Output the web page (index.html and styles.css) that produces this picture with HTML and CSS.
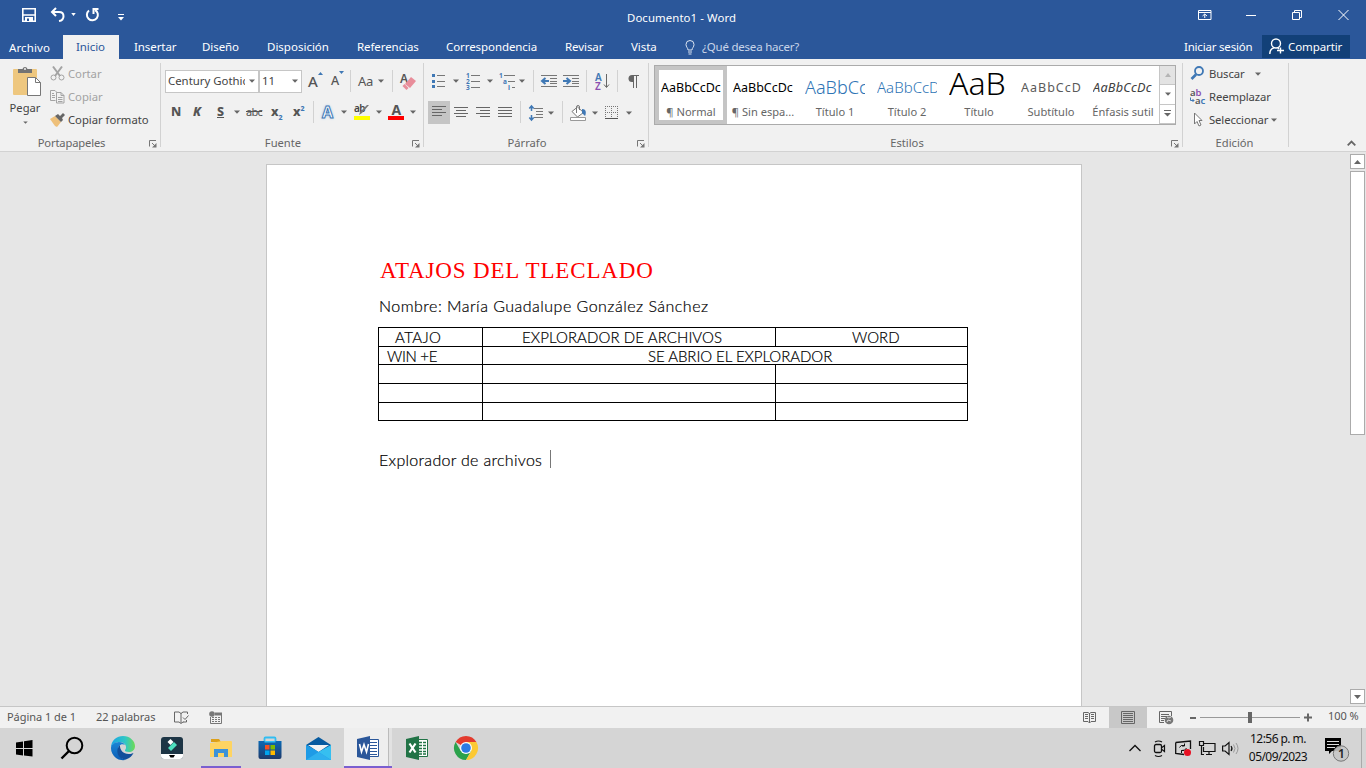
FILE: index.html
```html
<!DOCTYPE html>
<html lang="es">
<head>
<meta charset="utf-8">
<title>Documento1 - Word</title>
<link rel="stylesheet" href="styles.css">
</head>
<body>
<svg class="defs" width="0" height="0">
  <symbol id="caret" viewBox="0 0 6 4"><path d="M0 .5h6L3 3.700z" fill="#666"/></symbol>
  <symbol id="launch" viewBox="0 0 8 8"><path d="M.5 6.500V.5H7M3 3l3.500 3.500" stroke="#777" fill="none"/><path d="M7.500 3v4.500H3z" fill="#777"/></symbol>
</svg>

<header class="titlebar">
  <div class="quick">
    <svg width="16" height="16" viewBox="0 0 16 16"><path d="M1.800 1.800h12.400v12.400H1.800zM2 8h12" fill="none" stroke="#fff" stroke-width="1.600"/><path d="M4 10h8v4H4z" fill="#fff"/><path d="M6 11.500h2V14H6z" fill="#2b579a"/></svg>
    <svg width="16" height="16" viewBox="0 0 16 16"><path d="M6 1L2 5l4 4M2.500 5h6.500c6 0 6 8 0 9" fill="none" stroke="#fff" stroke-width="2"/></svg>
    <svg class="car-w" width="5" height="3" viewBox="0 0 6 4"><path d="M0 0h6L3 4z" fill="#fff"/></svg>
    <svg width="15" height="16" viewBox="0 0 15 16"><path d="M4 3.500A5.500 5.500 0 1 0 10 3" fill="none" stroke="#fff" stroke-width="2"/><path d="M8.500 7V2h5" fill="none" stroke="#fff" stroke-width="2"/></svg>
    <svg width="6" height="7" viewBox="0 0 6 7"><path d="M0 .5h6" stroke="#fff"/><path d="M0 3h6L3 6.500z" fill="#fff"/></svg>
  </div>
  <div class="doc-name">Documento1 - Word</div>
  <div class="win-buttons">
    <svg width="14" height="12" viewBox="0 0 14 12"><path d="M.5 1.500h12.500v9H.5zM.5 3.500H13M6.750 9V5M4.500 7l2.250-2L9 7" fill="none" stroke="#fff"/></svg>
    <svg width="11" height="12" viewBox="0 0 11 12"><path d="M0 6.500h10" stroke="#fff"/></svg>
    <svg width="11" height="12" viewBox="0 0 11 12"><path d="M.5 3.500h7v7h-7zM2.500 3V1.500h7v7H8" fill="none" stroke="#fff"/></svg>
    <svg width="11" height="12" viewBox="0 0 11 12"><path d="M.5 1l10 10M10.500 1l-10 10" stroke="#fff" fill="none"/></svg>
  </div>
</header>

<nav class="tabs">
  <div class="tab-list">
    <span class="file">Archivo</span><span class="active">Inicio</span><span>Insertar</span><span>Diseño</span><span>Disposición</span><span>Referencias</span><span>Correspondencia</span><span>Revisar</span><span>Vista</span>
    <span class="tell"><svg width="10" height="15" viewBox="0 0 10 15"><path d="M3 10C3 8 1 7 1 4.500a4 4 0 0 1 8 0C9 7 7 8 7 10zM3 12h4M3.500 14h3" fill="none" stroke="#dce5f2"/></svg>¿Qué desea hacer?</span>
  </div>
  <div class="account"><span class="signin">Iniciar sesión</span><span class="share"><svg width="16" height="17" viewBox="0 0 16 17"><circle cx="7" cy="5.500" r="4.500" fill="none" stroke="#fff" stroke-width="1.400"/><path d="M.8 16c0-3.500 1.700-5.500 4-6M9 10l1 1M11.500 9.500v6M8 12.500h7" fill="none" stroke="#fff" stroke-width="1.400"/></svg>Compartir</span></div>
</nav>

<section class="ribbon">
  <div class="group clipboard">
    <div class="clip-body">
      <div class="paste">
        <svg width="30" height="31" viewBox="0 0 30 31"><rect x="1" y="3" width="24" height="26" rx="1" fill="#eec77f"/><path d="M6 3h4.500a2.600 2.600 0 0 1 5 0H20v4H6z" fill="#737373"/><circle cx="13" cy="3" r="1" fill="#f1f1f1"/><path d="M15.500 11.500h8l5 5v13h-13z" fill="#fff" stroke="#777"/><path d="M23.500 11.500v5h5" fill="none" stroke="#777"/></svg>
        <span>Pegar</span>
        <svg width="5" height="3"><use href="#caret"/></svg>
      </div>
      <div class="clip-list">
        <div class="dim"><svg width="15" height="15" viewBox="0 0 15 15"><path d="M3 .5l7 9.500M12 .5L5 10" stroke="#a3a3a3" stroke-width="2"/><circle cx="3.500" cy="11.500" r="2.500" fill="none" stroke="#a3a3a3"/><circle cx="11.500" cy="11.500" r="2.500" fill="none" stroke="#a3a3a3"/></svg><span>Cortar</span></div>
        <div class="dim"><svg width="15" height="15" viewBox="0 0 15 15"><path d="M5.500 11.500h-5v-10H5l2.500 2.500M2 4.500h2M2 6.500h3M2 8.500h3M6.500 3.500H11l3 3v7.500H6.500zM11 3.500v3h3M8 8.500h4.500M8 10.500h4.500M8 12.500h4.500" fill="none" stroke="#a3a3a3"/></svg><span>Copiar</span></div>
        <div><svg width="15" height="15" viewBox="0 0 15 15"><path d="M0 7l5-3 6 6-4 5-2-1z" fill="#eec07a"/><path d="M5 4l3-2 2 2 3-3 2 2-3 3 1 2-2 2z" fill="#666"/></svg><span>Copiar formato</span></div>
      </div>
    </div>
    <div class="caption"><span>Portapapeles</span><svg width="8" height="8"><use href="#launch"/></svg></div>
  </div>

  <div class="group font">
    <div class="tools font-a">
      <div class="combo family"><span>Century Gothic</span><svg width="6" height="4"><use href="#caret"/></svg></div>
      <div class="combo size"><span>11</span><svg width="6" height="4"><use href="#caret"/></svg></div>
      <span class="glyph grow">A<svg width="5" height="3" viewBox="0 0 5 3"><path d="M0 3h5L2.500 0z" fill="#3f78b5"/></svg></span>
      <span class="glyph grow shrink">A<svg width="5" height="3" viewBox="0 0 5 3"><path d="M0 0h5L2.500 3z" fill="#3f78b5"/></svg></span>
      <i class="rule"></i>
      <span class="glyph aa">Aa</span>
      <svg width="6" height="4"><use href="#caret"/></svg>
      <i class="rule"></i>
      <svg width="17" height="17" viewBox="0 0 17 17"><text x="0" y="10" class="svg-a">A</text><path d="M5 11l6-7 5 4-6 7z" fill="#e88d9a"/><path d="M3.500 12l4 4" stroke="#e88d9a" stroke-width="3"/></svg>
    </div>
    <div class="tools font-b">
      <b class="glyph">N</b><b class="glyph ital">K</b><b class="glyph under">S</b>
      <svg width="6" height="4"><use href="#caret"/></svg>
      <span class="glyph strike">abc</span>
      <b class="glyph">x<sub>2</sub></b><b class="glyph">x<sup>2</sup></b>
      <i class="rule"></i>
      <span class="effect">A</span>
      <svg width="6" height="4"><use href="#caret"/></svg>
      <svg width="17" height="17" viewBox="0 0 17 17"><text x="0" y="8" class="svg-ab">ab</text><path d="M15 1L8 9l-3 2 1-3 7-7z" fill="#777"/><path d="M0 12h16v4H0z" fill="#ff0"/></svg>
      <svg width="6" height="4"><use href="#caret"/></svg>
      <svg width="17" height="17" viewBox="0 0 17 17"><text x="3.500" y="11" class="svg-fa">A</text><path d="M0 12h16v4H0z" fill="#f00"/></svg>
      <svg width="6" height="4"><use href="#caret"/></svg>
    </div>
    <div class="caption"><span>Fuente</span><svg width="8" height="8"><use href="#launch"/></svg></div>
  </div>

  <div class="group paragraph">
    <div class="tools par-a">
      <svg width="14" height="16" viewBox="0 0 14 16"><path d="M0 1h3v3H0zM0 7h3v3H0zM0 12h3v3H0z" fill="#3f78b5"/><path d="M5 2.500h8M5 8.500h8M5 13.500h8" stroke="#777"/></svg>
      <svg width="6" height="4"><use href="#caret"/></svg>
      <svg width="15" height="17" viewBox="0 0 15 17"><text class="svg-n" x="0" y="5">1</text><text class="svg-n" x="0" y="11">2</text><text class="svg-n" x="0" y="17">3</text><path d="M5 2.500h9M5 8.500h9M5 14.500h9" stroke="#777"/></svg>
      <svg width="6" height="4"><use href="#caret"/></svg>
      <svg width="16" height="17" viewBox="0 0 16 17"><text class="svg-n" x="0" y="5">1</text><text class="svg-n" x="4" y="11">a</text><text class="svg-n" x="9" y="17">i</text><path d="M5 2.500h11M9 8.500h7M13 14.500h3" stroke="#777"/></svg>
      <svg width="6" height="4"><use href="#caret"/></svg>
      <i class="rule"></i>
      <svg width="16" height="14" viewBox="0 0 16 14"><path d="M0 1.500h16M9 4.500h7M9 7.500h7M9 9.500h7M0 12.500h16" stroke="#777"/><path d="M8 7H2M4.500 4L1 7l3.500 3" fill="none" stroke="#3f78b5" stroke-width="2"/></svg>
      <svg width="16" height="14" viewBox="0 0 16 14"><path d="M0 1.500h16M9 4.500h7M9 7.500h7M9 9.500h7M0 12.500h16" stroke="#777"/><path d="M0 7h6M3.500 4L7 7l-3.500 3" fill="none" stroke="#3f78b5" stroke-width="2"/></svg>
      <i class="rule"></i>
      <svg width="15" height="17" viewBox="0 0 15 17"><text x="0" y="8" class="svg-az blue">A</text><text x="0" y="17" class="svg-az purple">Z</text><path d="M11.500 1v13M9 11.500l2.500 3 2.500-3" fill="none" stroke="#666"/></svg>
      <i class="rule"></i>
      <svg width="11" height="13" viewBox="0 0 11 13"><path d="M5 .5h6M5.500 0v13M8.500 0v13" stroke="#666" fill="none"/><path d="M6 0v7H4A3.500 3.500 0 0 1 4 0z" fill="#666"/></svg>
    </div>
    <div class="tools par-b">
      <span class="chosen"><svg width="15" height="12" viewBox="0 0 15 12"><path d="M0 .5h14M0 3.500h10M0 6.500h14M0 9.500h10" stroke="#666"/></svg></span>
      <svg width="15" height="12" viewBox="0 0 15 12"><path d="M0 .5h14M2 3.500h10M0 6.500h14M2 9.500h10" stroke="#666"/></svg>
      <svg width="15" height="12" viewBox="0 0 15 12"><path d="M0 .5h14M4 3.500h10M0 6.500h14M4 9.500h10" stroke="#666"/></svg>
      <svg width="15" height="12" viewBox="0 0 15 12"><path d="M0 .5h14M0 3.500h14M0 6.500h14M0 9.500h14" stroke="#666"/></svg>
      <i class="rule"></i>
      <svg width="15" height="16" viewBox="0 0 15 16"><path d="M5 3.500h9M7 6.500h7M7 9.500h7M5 12.500h9" stroke="#777"/><path d="M2.500 1v5M2.500 10v5M.3 3.500L2.500 1l2.200 2.500M.3 12.500L2.500 15l2.200-2.500" fill="none" stroke="#3f78b5" stroke-width="1.500"/></svg>
      <svg width="6" height="4"><use href="#caret"/></svg>
      <i class="rule"></i>
      <svg width="17" height="16" viewBox="0 0 17 16"><path d="M2 6.500L7.500 2l6 5.500-6 4.500z" fill="#fff" stroke="#777"/><path d="M6.500 8V2a1.500 1.500 0 0 1 3 0v3" fill="none" stroke="#777"/><path d="M12 4c5 0 4 5 3 7l-3-3z" fill="#3f78b5"/><path d="M.5 12.500h15v3H.5z" fill="#fff" stroke="#999"/></svg>
      <svg width="6" height="4"><use href="#caret"/></svg>
      <svg width="13" height="13" viewBox="0 0 13 13"><path d="M.5 0v12M6.500 0v12M12.500 0v12M0 .5h13M0 6.500h13" stroke="#777" stroke-dasharray="1 1"/><path d="M0 12.500h13" stroke="#555"/></svg>
      <svg width="6" height="4"><use href="#caret"/></svg>
    </div>
    <div class="caption"><span>Párrafo</span><svg width="8" height="8"><use href="#launch"/></svg></div>
  </div>

  <div class="group styles">
    <div class="gallery">
      <div class="style on"><div class="sample">AaBbCcDc</div><span>¶ Normal</span></div>
      <div class="style"><div class="sample">AaBbCcDc</div><span>¶ Sin espa...</span></div>
      <div class="style"><div class="sample h1">AaBbCc</div><span>Título 1</span></div>
      <div class="style"><div class="sample h2">AaBbCcD</div><span>Título 2</span></div>
      <div class="style"><div class="sample big">AaB</div><span>Título</span></div>
      <div class="style"><div class="sample sub">AaBbCcD</div><span>Subtítulo</span></div>
      <div class="style"><div class="sample emph">AaBbCcDc</div><span>Énfasis sutil</span></div>
      <div class="gallery-nav">
        <i class="off"><svg width="6" height="4" viewBox="0 0 6 4"><path d="M0 4h6L3 0z" fill="#b5b5b5"/></svg></i>
        <i><svg width="6" height="4"><use href="#caret"/></svg></i>
        <i><svg width="7" height="7" viewBox="0 0 7 7"><path d="M0 .5h7" stroke="#666"/><path d="M0 3h7L3.500 6.500z" fill="#666"/></svg></i>
      </div>
    </div>
    <div class="caption"><span>Estilos</span><svg width="8" height="8"><use href="#launch"/></svg></div>
  </div>

  <div class="group editing">
    <div class="edit-list">
      <div><svg width="15" height="15" viewBox="0 0 15 15"><circle cx="9" cy="5" r="4" fill="none" stroke="#3f78b5" stroke-width="1.800"/><path d="M6 8.500L1.500 13" stroke="#3f78b5" stroke-width="2.600"/></svg><span>Buscar</span><svg class="far" width="6" height="4"><use href="#caret"/></svg></div>
      <div><svg width="15" height="16" viewBox="0 0 15 16"><text x="0" y="7" class="svg-r">a<tspan fill="#8a4fb0">b</tspan></text><text x="5" y="15" class="svg-r">a<tspan fill="#3f78b5">c</tspan></text><path d="M.5 8.500v3H4M2.500 10L4 11.500 2.500 13" fill="none" stroke="#3f78b5"/></svg><span>Reemplazar</span></div>
      <div><svg width="15" height="15" viewBox="0 0 15 15"><path d="M4.500 1v11l2.500-2.500 2 4.500 2-1-2-4.500h3z" fill="#fff" stroke="#777"/></svg><span>Seleccionar</span><svg class="near" width="6" height="4"><use href="#caret"/></svg></div>
    </div>
    <div class="caption"><span>Edición</span></div>
  </div>
  <svg class="collapse" width="9" height="6" viewBox="0 0 9 6"><path d="M.7 5.300l3.800-3.800 3.800 3.800" fill="none" stroke="#666" stroke-width="1.800"/></svg>
</section>

<main class="workspace">
  <article class="sheet">
    <h1>ATAJOS DEL TLECLADO</h1>
    <p class="name">Nombre: María Guadalupe González Sánchez</p>
    <table>
      <colgroup><col class="c1"><col class="c2"><col class="c3"></colgroup>
      <tr class="tall"><td class="atajo">ATAJO</td><td class="explora">EXPLORADOR DE ARCHIVOS</td><td class="word">WORD</td></tr>
      <tr><td class="win">WIN +E</td><td class="abrio" colspan="2">SE ABRIO EL EXPLORADOR</td></tr>
      <tr class="tall"><td></td><td></td><td></td></tr>
      <tr class="tall"><td></td><td></td><td></td></tr>
      <tr><td></td><td></td><td></td></tr>
    </table>
    <p class="last">Explorador de archivos<i class="cursor"></i></p>
  </article>
  <div class="scroll">
    <i class="arrow"><svg width="7" height="4" viewBox="0 0 7 4"><path d="M0 4h7L3.500 0z" fill="#666"/></svg></i>
    <i class="thumb"></i>
    <i class="arrow down"><svg width="7" height="4" viewBox="0 0 7 4"><path d="M0 0h7L3.500 4z" fill="#666"/></svg></i>
  </div>
</main>

<footer class="status">
  <span class="t-pag">Página 1 de 1</span><span class="t-pal">22 palabras</span>
  <svg width="15" height="13" viewBox="0 0 15 13"><path d="M7 2.500L5 1H.5v10H5l2 1.500L9 11h1M7 2v10M7 2.500L9 1h4.500v2M9 6.500l2 2 3.500-4M12.500 9v2h-3" fill="none" stroke="#666"/></svg>
  <svg class="macro" width="14" height="13" viewBox="0 0 14 13"><path d="M1.500 6v6.500h11v-10H7M3 6.500h2m1 0h2m1 0h2M3 8.500h2m1 0h2m1 0h2M3 10.500h2m1 0h2m1 0h2" fill="none" stroke="#777"/><path d="M6 1.500h7v3H6z" fill="#777"/><circle cx="3" cy="3" r="2.800" fill="#777"/></svg>
  <div class="views">
    <svg width="14" height="13" viewBox="0 0 14 13"><path d="M6.500 2.500L5 1.500H.5v9H5l1.500 1.500L8 10.500h4.500v-9H8zM6.500 2v10M2 3.500h3M2 5.500h3M2 7.500h3M8 3.500h3M8 5.500h3M8 7.500h3" fill="none" stroke="#666"/></svg>
    <span class="view-on"><svg width="14" height="13" viewBox="0 0 14 13"><path d="M.5.5h13v12H.5zM2 2.500h10M2 4.500h10M2 6.500h10M2 8.500h10M2 10.500h10" fill="none" stroke="#666"/></svg></span>
    <svg width="15" height="14" viewBox="0 0 15 14"><path d="M5 11.500H.5V.5h12V5M2 3.500h8M2 5.500h6M2 7.500h4M2 9.500h3" fill="none" stroke="#666"/><circle cx="10" cy="9" r="4.300" fill="#777"/><path d="M8 6l2 1 2-1M8 11l1-2 3 1" fill="none" stroke="#ddd"/></svg>
  </div>
  <div class="zoom"><i class="minus"></i><div class="track"><i class="handle"></i></div><svg width="9" height="9" viewBox="0 0 9 9"><path d="M0 4.500h8M4 .5v8" stroke="#666" stroke-width="2"/></svg><span>100 %</span></div>
</footer>

<div class="taskbar">
  <div class="apps">
    <div class="app"><svg width="17" height="17" viewBox="0 0 17 17"><path d="M0 2.500l7-1v6.500H0zM8 1.300L16.500 0v8H8zM0 9h7v6.500l-7-1zM8 9h8.500v7.500L8 15.500z"/></svg></div>
    <div class="app search"><svg width="24" height="24" viewBox="0 0 24 24"><circle cx="14.500" cy="9.500" r="7.800" fill="none" stroke="#000" stroke-width="2"/><path d="M9 15L1.500 22.500" stroke="#000" stroke-width="2.400"/></svg></div>
    <div class="app edge"><svg width="24" height="24" viewBox="0 0 24 24"><defs><linearGradient id="e1"><stop stop-color="#1ba4e4"/><stop offset=".6" stop-color="#30c7c5"/><stop offset="1" stop-color="#6edb54"/></linearGradient><linearGradient id="e2" x2="0" y2="1"><stop stop-color="#1b86d6"/><stop offset="1" stop-color="#0c5db5"/></linearGradient></defs><path d="M0 12C0 4 6 0 12 0c7 0 12 5 12 10 0 4-3 6-6 6-3 0-4.500-1-4-2 1-1 1-2 1-3 0-3-3-5-6.500-5C4 6 1 8.500 0 12z" fill="url(#e1)"/><path d="M0 12c0-3 3.500-6 8-6 3 0 5 1 6 3-4-2-7 1-7 5 0 5 4 10 9 9.500A12 12 0 0 1 0 12z" fill="url(#e2)"/><path d="M9 9c-6 6-1 16 7 14 3-1 5-3 6.500-6-2 1-4 1-5 1-5 0-9-4-8.500-9z" fill="#124f9b"/></svg></div>
    <div class="app"><svg width="22" height="22" viewBox="0 0 22 22"><rect width="22" height="22" rx="3" fill="#1d3545"/><path d="M0 17h22v2a3 3 0 0 1-3 3H3a3 3 0 0 1-3-3z" fill="#fff"/><path d="M9.500 2l3 3-3 3-3-3z" fill="#fff"/><path d="M13 5l3 3-6 6-3-3z" fill="#4ee0bf"/><path d="M8 18h6l-1.500 2.500h-3z"/></svg></div>
    <div class="app running"><svg width="22" height="20" viewBox="0 0 22 20"><path d="M1 1h8l2 3H1z" fill="#dda019"/><path d="M1 5l11-2h9a1 1 0 0 1 1 1v15H0V5z" fill="#fed462"/><path d="M4 11h14v8h-4v-4H8v4H4z" fill="#3d92d8"/></svg></div>
    <div class="app"><svg width="24" height="24" viewBox="0 0 24 24"><defs><linearGradient id="st" x2="0" y2="1"><stop stop-color="#0a68b4"/><stop offset="1" stop-color="#1f3a6b"/></linearGradient></defs><path d="M6.500 7V2.500q0-1 1-1h9q1 0 1 1V7" fill="none" stroke="#31bdf2" stroke-width="1.800"/><path d="M.5 5h23v16a2 2 0 0 1-2 2h-19a2 2 0 0 1-2-2z" fill="url(#st)"/><path d="M6.500 5h11v1.500h-11z" fill="#31bdf2"/><path d="M7 9h4.500v4.500H7z" fill="#f25022"/><path d="M12.500 9H17v4.500h-4.500z" fill="#7fba00"/><path d="M7 14.500h4.500V19H7z" fill="#00a4ef"/><path d="M12.500 14.500H17V19h-4.500z" fill="#ffb900"/></svg></div>
    <div class="app"><svg width="25" height="23" viewBox="0 0 25 23"><path d="M0 8l12.500-8L25 8v7H0z" fill="#075a9f"/><path d="M2 8h21l-10.500 7z" fill="#f3f3f3"/><path d="M0 8l12.500 7L25 8v15H0z" fill="#36bff0"/><path d="M0 8l12.500 7L25 23H0z" fill="#1e9be6"/><path d="M0 23l12.500-8L25 23z" fill="#2fb0ee"/></svg></div>
    <div class="app current"><svg width="24" height="24" viewBox="0 0 24 24"><path d="M12 3.500h10.500v17H12" fill="#fff" stroke="#2b579a"/><path d="M13 6.500h8M13 9.500h8M13 12.500h8M13 15.500h8M13 18.500h8" stroke="#2b579a"/><path d="M1 3l13-3v24L1 21z" fill="#2b579a"/><path d="M3.500 8l2 8L8 8.500l2.500 7.500 2-8" fill="none" stroke="#fff" stroke-width="1.600"/></svg></div>
    <div class="app"><svg width="24" height="24" viewBox="0 0 24 24"><path d="M12 3.500h10.500v17H12" fill="#fff" stroke="#217346"/><path d="M14 6.500h3m1 0h3M14 9.500h3m1 0h3M14 12.500h3m1 0h3M14 15.500h3m1 0h3M14 18h3m1 0h3" stroke="#217346" stroke-width="1.500"/><path d="M1 3l13-3v24L1 21z" fill="#217346"/><path d="M4.500 7.500l6 9M10.500 7.500l-6 9" stroke="#fff" stroke-width="2.200"/></svg></div>
    <div class="app"><svg width="24" height="24" viewBox="0 0 24 24"><path d="M12 12L1.600 6A12 12 0 0 1 22.400 6z" fill="#e33b2e"/><path d="M12 12l5.200 3L12 24A12 12 0 0 1 1.600 6l5.200 9z" fill="#2ba24c"/><path d="M12 6h10.400A12 12 0 0 1 12 24l5.200-9z" fill="#fcc934"/><circle cx="12" cy="12" r="6" fill="#fff"/><circle cx="12" cy="12" r="4.800" fill="#2c7be5"/></svg></div>
  </div>
  <div class="tray">
    <svg width="12" height="8" viewBox="0 0 12 8"><path d="M.5 7L6 1.500 11.500 7" fill="none" stroke="#111" stroke-width="1.300"/></svg>
    <svg width="14" height="17" viewBox="0 0 14 17"><rect x="1.500" y="4.500" width="7" height="8" rx="1.500" fill="none" stroke="#111" stroke-width="1.300"/><path d="M9 7.500l2.500-2v6L9 9.500M2 2q3.500-2 7 0M2 15.500q3.500 2 7 0" fill="none" stroke="#111" stroke-width="1.200"/></svg>
    <svg width="17" height="17" viewBox="0 0 17 17"><path d="M.7 2.500L15.500 1v8M.7 2.500v11L9 14.500" fill="none" stroke="#111" stroke-width="1.300"/><path d="M4.500 7.500q1-3 5-2M9.500 3.500V6H7M11.500 8q-1 3-5 2.500M6.500 13v-2.500H9" fill="none" stroke="#111"/><circle cx="12.500" cy="12.500" r="3.500" fill="#e81123"/></svg>
    <svg width="17" height="15" viewBox="0 0 17 15"><path d="M5 2.500h11v8H4.500V6M.5.500h4v4h-4zM2.500 5v8.500H5M10 11v2.500M7 13.500h6" fill="none" stroke="#111" stroke-width="1.200"/></svg>
    <svg width="18" height="15" viewBox="0 0 18 15"><path d="M.6 5h2.500L7 1.500v12L3.100 10H.6zM9 5q2 2.500 0 5" fill="none" stroke="#111" stroke-width="1.200"/><path d="M11.500 3.500q3 4 0 8M14 2q4 5.500 0 11" fill="none" stroke="#999"/></svg>
    <div class="clock"><span>12:56 p. m.</span><span>05/09/2023</span></div>
    <svg class="notice" width="25" height="26" viewBox="0 0 25 26"><path d="M0 1h16v13H7l-3 3v-3H0z" fill="#000"/><path d="M2 4.500h12M2 7.500h12M2 10.500h8" stroke="#ddd"/><circle cx="16" cy="16.500" r="7.700" fill="#c6c6c6" fill-opacity=".9" stroke="#777"/><text x="13" y="21" class="svg-one">1</text></svg>
    <i class="peek"></i>
  </div>
</div>
</body>
</html>
```

FILE: styles.css
```css
* { box-sizing: border-box; }
body { margin: 0; width: 1366px; height: 768px; overflow: hidden; background: #e6e6e6; color: #444; font: 11.4px/16px "Noto Sans", "Open Sans", sans-serif; display: flex; flex-direction: column; }
.defs { display: none; }
svg { display: block; flex: none; overflow: visible; }
i { font-style: normal; }

.titlebar { height: 35px; background: #2b579a; display: flex; align-items: flex-start; color: #fff; flex: none; }
.quick { display: flex; align-items: center; padding: 7px 0 0 21px; width: 627px; }
.quick svg:nth-child(2) { margin-left: 13px; }
.quick .car-w { margin: 0 0 2px 5px; }
.quick svg:nth-child(4) { margin-left: 9px; }
.quick svg:nth-child(5) { margin: 4px 0 0 18px; }
.doc-name { padding-top: 10px; width: 571px; letter-spacing: .08px; }
.win-buttons { display: grid; grid-template-columns: 48px 46px 46px 12px; padding-top: 9px; }

.tabs { height: 24px; background: #2b579a; color: #fff; display: flex; justify-content: space-between; font-size: 11.5px; line-height: 24px; flex: none; }
.tab-list { display: flex; letter-spacing: -.08px; }
.tab-list span { padding-left: 15px; white-space: nowrap; }
.tab-list span:nth-child(1) { width: 63px; padding-left: 9px; line-height: 26px; letter-spacing: .1px; }
.tab-list .active { width: 56px; padding-left: 13px; background: #f1f1f1; color: #2b579a; }
.tab-list span:nth-child(3) { width: 68px; }
.tab-list span:nth-child(4) { width: 65px; }
.tab-list span:nth-child(5) { width: 90px; letter-spacing: 0; }
.tab-list span:nth-child(6) { width: 89px; }
.tab-list span:nth-child(7) { width: 119px; }
.tab-list span:nth-child(8) { width: 66px; }
.tab-list span:nth-child(9) { width: 54px; }
.tab-list .tell { display: flex; gap: 7px; align-items: center; color: #c8d5e9; letter-spacing: -.22px; }
.account { display: flex; }
.signin { width: 78px; letter-spacing: -.2px; }
.share { width: 88px; height: 23px; margin-right: 16px; background: #124078; display: flex; align-items: center; gap: 3px; padding-left: 7px; letter-spacing: -.1px; }

.ribbon { height: 93px; background: #f1f1f1; border-bottom: 1px solid #d2d2d2; display: flex; flex: none; font-size: 11.3px; }
.group { height: 84px; margin-top: 4px; border-right: 1px solid #d2d2d2; display: flex; flex-direction: column; }
.caption { height: 16px; display: flex; align-items: center; justify-content: center; color: #666; position: relative; margin: auto 0 -4px; font-size: 11.2px; }
.caption span { margin-right: 18px; }
.caption svg { position: absolute; right: 3px; top: 5px; }
.clipboard { width: 161px; }
.clipboard .caption span { margin-right: 17px; letter-spacing: -.15px; }
.font { width: 263px; }
.paragraph { width: 225px; }
.styles { width: 534px; }
.editing { width: 106px; }
.editing .caption span { margin: 0 2px 0 0; }
.styles .caption span { margin-right: 17px; }

.clip-body { display: flex; height: 71px; }
.paste { width: 50px; padding-top: 3px; display: flex; flex-direction: column; align-items: center; color: #444; }
.paste svg:first-child { margin-left: 4px; }
.paste span { margin: 3px 0 5px; font-size: 11.2px; }
.clip-list, .edit-list { margin-top: -1px; }
.clip-list > div, .edit-list > div { height: 23px; display: flex; align-items: center; gap: 3px; white-space: nowrap; letter-spacing: -.03px; }
.clip-list .dim { color: #a3a3a3; }

.tools { display: grid; align-items: center; height: 24px; color: #444; flex: none; }
.font-a { grid-template-columns: 94px 49px 23px 19px 8px 20px 14px 8px 20px; padding-left: 4px; margin-top: 6px; }
.font-b { grid-template-columns: 22px 24px 18px 12px 24px 22px 21px 9px 19px 13px 22px 12px 22px 8px; padding-left: 9px; margin-top: 7px; }
.par-a { grid-template-columns: 21px 13px 21px 12px 20px 14px 8px 22px 23px 9px 22px 11px 11px; padding-left: 8px; margin-top: 6px; }
.par-b { grid-template-columns: 26px 22px 22px 22px 9px 19px 14px 8px 22px 13px 21px 8px; padding-left: 4px; margin-top: 7px; }
.par-b > svg { margin-top: 1px; }
.rule { width: 1px; height: 22px; background: #d2d2d2; }
.combo { height: 23px; border: 1px solid #c6c6c6; background: #fff; display: flex; align-items: center; justify-content: space-between; padding: 0 3px 0 2px; }
.combo span { overflow: hidden; white-space: nowrap; font-size: 11.4px; }
.family span { width: 77px; }
.family { width: 94px; }
.size { width: 43px; }
.glyph { font-size: 13px; white-space: nowrap; line-height: 20px; color: #555; }
b.glyph { font: 800 12.5px/20px "Noto Sans", sans-serif; padding-left: 1px; }
.glyph sub, .glyph sup { font-size: 7px; color: #3f78b5; line-height: 0; }
.ital { font-style: italic !important; }
.under { text-decoration: underline; }
.strike { text-decoration: line-through; font-size: 11px; letter-spacing: -.7px; }
.grow { display: flex; align-items: flex-start; font-size: 15px; font-weight: 500; line-height: 22px; }
.grow svg { margin-top: 2px; }
.shrink { font-size: 12.5px; line-height: 24px; }
.aa { font-size: 13px; letter-spacing: -.4px; }
.effect { color: #fff; font: 700 16px/22px "Noto Sans", sans-serif; -webkit-text-stroke: 1px #3f78b5; text-shadow: 0 0 3px #7eb2e2; }
.svg-a { font: 600 12px "Noto Sans"; fill: #555; }
.svg-ab { font: 600 10px "Noto Sans"; fill: #444; letter-spacing: -.5px; }
.svg-fa { font: 700 14px "Noto Sans"; fill: #555; }
.svg-n { font: 700 6.5px "Noto Sans"; fill: #3f78b5; }
.svg-az { font: 600 10px "Noto Sans"; }
.blue { fill: #3f78b5; }
.purple { fill: #8a4fb0; }
.svg-r { font: 600 9.5px "Noto Sans"; fill: #555; }
.svg-one { font: 600 12px "Noto Sans"; fill: #222; }
.chosen { width: 22px; height: 23px; background: #c5c5c5; display: grid; place-items: center; }

.gallery { margin: 2px 0 0 5px; width: 522px; height: 60px; border: 1px solid #ababab; background: #fff; display: flex; }
.style { width: 72px; height: 58px; text-align: center; display: flex; flex-direction: column; align-items: center; color: #666; white-space: nowrap; font-size: 11.1px; }
.on { box-shadow: inset 0 0 0 4px #c5c5c5; }
.sample { width: 60px; height: 36px; line-height: 43px; overflow: hidden; text-align: left; color: #000; font-size: 12.5px; letter-spacing: 0; margin-bottom: 2px; }
.h1 { font-size: 18px; font-weight: 300; color: #2e74b5; }
.h2 { font-size: 15px; font-weight: 300; color: #2e74b5; }
.big { font-size: 32px; font-weight: 300; line-height: 34px; }
.sub { color: #5a5a5a; letter-spacing: 1px; }
.emph { font-style: italic; color: #404040; letter-spacing: .25px; font-size: 12.7px; }
.gallery-nav { width: 16px; display: flex; flex-direction: column; border-left: 1px solid #c6c6c6; }
.gallery-nav i { flex: 1; display: grid; place-items: center; border-bottom: 1px solid #c6c6c6; }
.gallery-nav .off { background: #e3e3e3; }

.edit-list { padding-left: 7px; height: 72px; }
.edit-list > div { gap: 4px; letter-spacing: -.1px; }
.edit-list .far { margin-left: 6px; }
.edit-list .near { margin-left: -1px; }
.collapse { margin: 81px 0 0 58px; }

.workspace { height: 554px; flex: none; display: flex; justify-content: flex-end; gap: 268px; background: #e6e6e6; }
.sheet { width: 816px; height: 542px; margin-top: 12px; background: #fff; border: 1px solid #c6c6c6; border-bottom: 0; padding-left: 111px; color: #000; font: 300 15px/20px "Lato", sans-serif; -webkit-text-stroke: .2px currentColor; }
.sheet h1 { margin: 93px 0 0 2px; font: 23px/26px "Liberation Serif", serif; color: #f00; letter-spacing: .85px; white-space: nowrap; -webkit-text-stroke: 0; }
.sheet p { margin: 0 0 0 1px; font-size: 16px; }
.sheet .name { margin-top: 12px; letter-spacing: .48px; white-space: nowrap; }
table { border-collapse: collapse; table-layout: fixed; width: 590px; margin-top: 11px; }
.c1 { width: 104px; }
.c2 { width: 293px; }
.c3 { width: 192px; }
td { border: 1px solid #000; padding: 1px 0 0; height: 18px; line-height: 16px; white-space: nowrap; }
.tall td { padding-top: 0; height: 19px; line-height: 18px; }
td.atajo { padding-left: 16px; letter-spacing: .4px; }
td.explora { padding-left: 39px; letter-spacing: .08px; }
td.word { padding-left: 76px; }
td.win { padding-left: 8px; letter-spacing: -.3px; }
td.abrio { padding-left: 165px; letter-spacing: -.05px; }
.sheet .last { margin-top: 29px; display: flex; letter-spacing: .3px; }
.cursor { width: 1px; height: 18px; background: #777; margin-left: 8px; }
.scroll { width: 16px; padding: 2px 0; display: flex; flex-direction: column; }
.arrow, .thumb { width: 15px; border: 1px solid #ababab; background: #fff; }
.arrow { height: 15px; display: grid; place-items: center; }
.thumb { height: 264px; margin-top: 2px; }
.down { margin-top: auto; }

.status { height: 22px; border-top: 1px solid #c6c6c6; background: #f1f1f1; display: flex; align-items: center; flex: none; font-size: 11px; color: #555; letter-spacing: -.05px; }
.t-pal { margin-top: -2px; }
.t-pag { width: 89px; margin: -1px 0 0 7px; }
.t-pal { width: 78px; }
.macro { margin-left: 20px; }
.views { display: flex; align-items: center; margin-left: auto; height: 21px; }
.view-on { width: 38px; height: 21px; background: #c8c8c8; display: grid; place-items: center; margin: 0 12px; }
.zoom { display: flex; align-items: center; margin-left: 16px; width: 176px; }
.minus { width: 6px; height: 2px; background: #666; margin-right: 4px; }
.track { width: 100px; height: 1px; background: #999; display: flex; justify-content: center; align-items: center; margin-right: 4px; }
.handle { width: 4px; height: 11px; background: #666; flex: none; }
.zoom span { margin: -3px 0 0 15px; }

.taskbar { height: 40px; background: #d5d5d5; display: flex; justify-content: space-between; flex: none; color: #111; }
.apps { display: flex; }
.app { width: 49px; height: 40px; display: grid; place-items: center; }
.search { padding-right: 3px; }
.running { background: linear-gradient(#7a5fd0, #7a5fd0) 5px 38px / 40px 2px no-repeat; }
.current { background: linear-gradient(#7a5fd0, #7a5fd0) 1px 38px / 48px 2px no-repeat, linear-gradient(90deg, transparent 1px, #eee 1px, #eee 45px, #bbb 45px, #bbb 46px, #e2e2e2 46px); }
.tray { display: grid; grid-template-columns: 24px 22px 24px 23px 22px 81px 36px 5px; align-items: center; }
.clock { display: flex; flex-direction: column; font-size: 12px; line-height: 18px; align-items: center; letter-spacing: -.55px; }
.tray .clock { margin-left: -13px; margin-top: -1px; }
.notice { margin-top: 4px; }
.peek { height: 40px; border-left: 1px solid #aaa; }
```
